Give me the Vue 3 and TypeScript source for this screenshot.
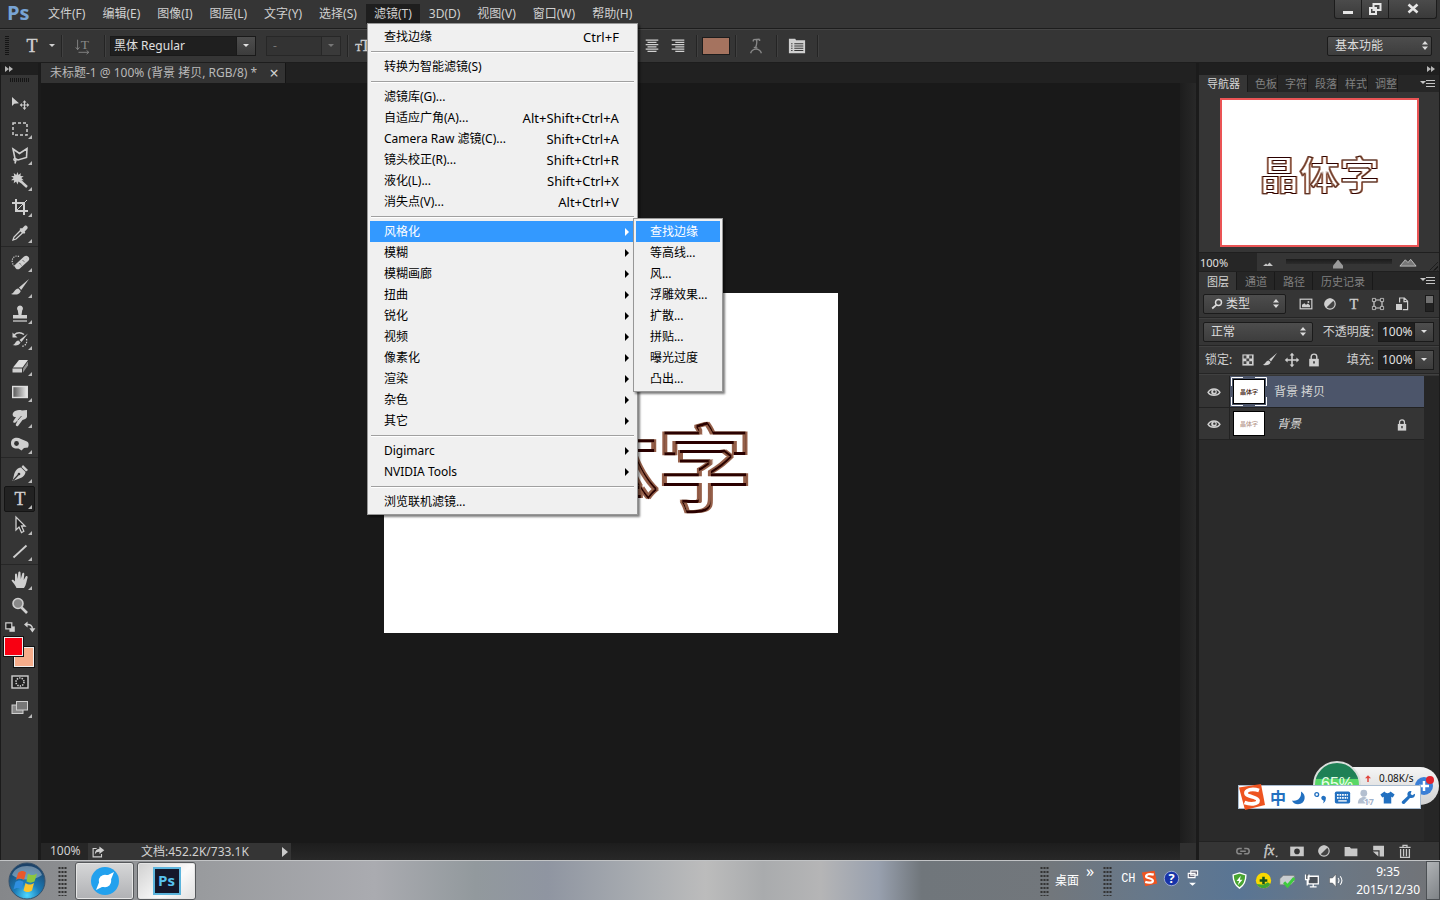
<script setup lang="ts">
import { ref } from 'vue'

interface MenuRow {
  label?: string
  keys?: string
  sub?: boolean
  open?: boolean
}

const menusBefore = ['文件(F)', '编辑(E)', '图像(I)', '图层(L)', '文字(Y)', '选择(S)']
const menusAfter = ['3D(D)', '视图(V)', '窗口(W)', '帮助(H)']

const filterMenu: MenuRow[] = [
  { label: '查找边缘', keys: 'Ctrl+F' },
  {},
  { label: '转换为智能滤镜(S)' },
  {},
  { label: '滤镜库(G)...' },
  { label: '自适应广角(A)...', keys: 'Alt+Shift+Ctrl+A' },
  { label: 'Camera Raw 滤镜(C)...', keys: 'Shift+Ctrl+A' },
  { label: '镜头校正(R)...', keys: 'Shift+Ctrl+R' },
  { label: '液化(L)...', keys: 'Shift+Ctrl+X' },
  { label: '消失点(V)...', keys: 'Alt+Ctrl+V' },
  {},
  { label: '风格化', sub: true, open: true },
  { label: '模糊', sub: true },
  { label: '模糊画廊', sub: true },
  { label: '扭曲', sub: true },
  { label: '锐化', sub: true },
  { label: '视频', sub: true },
  { label: '像素化', sub: true },
  { label: '渲染', sub: true },
  { label: '杂色', sub: true },
  { label: '其它', sub: true },
  {},
  { label: 'Digimarc', sub: true },
  { label: 'NVIDIA Tools', sub: true },
  {},
  { label: '浏览联机滤镜...' },
]

const stylizeMenu = ['查找边缘', '等高线...', '风...', '浮雕效果...', '扩散...', '拼贴...', '曝光过度', '凸出...']

const serifT = (size: number, y: number) =>
  `<text x="10" y="${y}" font-size="${size}" text-anchor="middle" font-family="Liberation Serif, serif" stroke="currentColor" stroke-width=".4">T</text>`

const icons: Record<string, string> = {
  move: '<path d="M2 4v9l2.300-2.200L9 10.300z"/><path d="M14.500 7.300l2 2.200h-1.400v2h2v-1.400l2.200 2-2.200 2v-1.500h-2v2h1.400l-2 2.300-2-2.300h1.400v-2h-2v1.500l-2.200-2 2.200-2v1.400h2v-2h-1.400z"/>',
  marquee: '<rect x="3" y="4" width="14" height="12" fill="none" stroke="currentColor" stroke-width="1.500" stroke-dasharray="3 2"/>',
  lasso: '<path d="M3 4l6.500 4.500L17 3.500l-.5 9-8.500 2.500-3-1.500zM6 14.500l-1 4M5 13.500c-2 0-1 3 1.500 2" fill="none" stroke="currentColor" stroke-width="1.600"/>',
  wand: '<path d="M7.500 1l1 3 2.300-2-.3 3 3.200.3-2.400 1.700 2.400 2.200-3.200.1.300 3-2.300-1.700-1 3-1.400-3L3.700 12.200l.5-2.900-3.200-.1L3.700 7 1 5.300l3.200-.3-.5-3 2.600 2z"/><path d="M10 9.500l7 6.500" stroke="currentColor" stroke-width="2.400"/>',
  crop: '<path d="M6 2v12h12M2 6h12v12" fill="none" stroke="currentColor" stroke-width="2"/><path d="M7 13L17 3" stroke="currentColor"/>',
  dropper: '<path d="M3 17l1-3 6.500-6.500 2.200 2.200L6 16z" fill="none" stroke="currentColor" stroke-width="1.300"/><path d="M9.500 6l1.500-1 1 .6L14.500 3c1.500-1.400 4.200 1 2.800 2.800L14.700 8.500l.6 1-1.300 1.500z"/>',
  heal: '<path d="M9 4.500c-4-2-8 2-6.500 6.500.5 2 1.500 3 3 3.500" fill="none" stroke="currentColor" stroke-width="1.200" stroke-dasharray="1.200 1.200"/><rect x="3.500" y="7.500" width="17" height="6" rx="3" transform="rotate(-42 12 10.500)"/><path d="M9.500 11l2 2.500M12.500 8l2.500 2.500M8 14h.1M16 6.500h.1" stroke="#444" stroke-dasharray="1 1"/>',
  brush: '<path d="M19 1L9 9.500l2.200 2.500z"/><path d="M8.500 10.500l2.200 2.400c-.5 3.300-5.700 4.600-9.700 3 3.500-.5 3-5 7.500-5.400z"/>',
  stamp: '<path d="M10 1.500a3 3 0 0 1 2.200 5L11.500 11H17v3.500H3V11h5.500l-.7-4.500A3 3 0 0 1 10 1.500z"/><path d="M3 17h14" stroke="currentColor" stroke-width="1.300"/>',
  history: '<path d="M4 5c4-3.500 8-2 10-.5" fill="none" stroke="currentColor" stroke-width="1.500"/><path d="M2.500 2.500v5h5z"/><path d="M18 3.500L9.500 10l2 2zM8.500 10.500l2 2c-1 3-5 3.500-8 2.500 3-.5 2.500-4 6-4.500z"/><path d="M16.500 9c1 4-1 7-5 7.500" fill="none" stroke="currentColor" stroke-width="1.200" stroke-dasharray="1.500 1.200"/>',
  eraser: '<path d="M3 11.500L9 4h9l-5.500 7.500z" fill="#ddd"/><path d="M2.500 12.500h9.500v4H2.500z"/><path d="M13 12.500l5-7v4l-5 7z" fill="#8d8d8d"/>',
  gradient: '<defs><linearGradient id="tg"><stop stop-color="#555"/><stop offset="1" stop-color="#eee"/></linearGradient></defs><rect x="2.700" y="4.500" width="14.600" height="11" fill="url(#tg)" stroke="#ddd" stroke-width="1.400"/>',
  smudge: '<path d="M3 5c2-3 6-3.500 9-2.500l5-.5v7c-1 2-2.500 2.500-4.500 3L8 18c-1.500.8-2.800-.8-2-2l2-4-2.500 2.500c-1.500 1-3-.3-2-1.700L6 9H4.500C3 8.500 2 6.800 3 5z"/><path d="M8 12l3.500-4" stroke="#555"/>',
  sponge: '<path d="M1 9c0-5 6-6.500 10-4l6 2.500c2 1 2 3.500 1 6l-4 .5-2.500 2.500-3-2C4 15 1 13.500 1 9z"/><circle cx="6.500" cy="9.500" r="2.400" fill="#333"/>',
  pen: '<path d="M13 2l5 5-2 1.500L11.500 4z"/><path d="M11 4.500l4.500 4.500c-.5 4-4 6-7.500 7L2.500 18 4 12c1-4 3-7 7-7.500z"/><path d="M3 17.500l5.500-6" stroke="#333" stroke-width="1.200"/><circle cx="9" cy="11" r="1.300" fill="#333"/>',
  type: serifT(18, 16),
  arrow: '<path d="M6 2v13l3-3 2.500 5.500 2.300-1.200L11.500 11H15z" fill="#222" stroke="currentColor" stroke-width="1.300"/>',
  line: '<path d="M3.500 16.500l13-12" stroke="currentColor" stroke-width="1.800"/>',
  hand: '<path d="M6.500 18c-1-3-3.500-5-5-7.500.5-1.500 2-1 3.500 1V4.500c.3-1.300 1.800-1.300 2 0L7.700 9 8.300 2.500c.4-1.300 2-1.300 2.200 0L10.800 9l1.500-5.500c.6-1.200 2-.8 2 .5L13.700 10l2-3.500c.8-1 2.200-.3 1.900.9C16.500 11 16.500 14.500 14 18z"/>',
  zoom: '<circle cx="8" cy="7.500" r="5" fill="#888" stroke="currentColor" stroke-width="1.600"/><path d="M11.500 11.500l5.500 5.500" stroke="currentColor" stroke-width="2.600"/>',
  mask: '<rect x="2" y="4" width="16" height="12" fill="#222" stroke="currentColor" stroke-width="1.400"/><circle cx="10" cy="10" r="4" fill="none" stroke="currentColor" stroke-width="1.600" stroke-dasharray="1.400 1.100"/>',
  screen: '<rect x="2" y="7" width="11" height="8.500" fill="#888" stroke="currentColor"/><rect x="6.500" y="3.500" width="11" height="8.500" fill="#777" stroke="currentColor"/>',
  reset: '<path d="M9 9h9v9H9z"/><path d="M3 3h10v10H3z" fill="#222" stroke="currentColor" stroke-width="2"/>',
  swap: '<path d="M5 6c5-1 9 2 9 7" fill="none" stroke="currentColor" stroke-width="2.400"/><path d="M6 1v10L0 6zM9 12h10l-5 7z"/>',
  typeDir: '<text x="12" y="13" font-size="15" text-anchor="middle" font-family="Liberation Serif, serif">T</text><path d="M4 3v11M2 11.500L4 14l2-2.500M5 17h11M14 15l2.500 2-2.500 2" fill="none" stroke="currentColor"/>',
  typeSize: '<text x="5" y="16" font-size="12" text-anchor="middle" stroke="currentColor" stroke-width=".4" font-family="Liberation Serif, serif">T</text><text x="13" y="16" font-size="19" text-anchor="middle" stroke="currentColor" stroke-width=".4" font-family="Liberation Serif, serif">T</text>',
  alignCenter: '<path d="M3 3.500h14M5 6h10M3 8.500h14M5 11h10M3 13.500h14M5 16h10" stroke="currentColor" stroke-width="1.200"/>',
  alignRight: '<path d="M3 3.500h14M7 6h10M3 8.500h14M7 11h10M3 13.500h14M7 16h10" stroke="currentColor" stroke-width="1.200"/>',
  warp: '<path d="M7 3l7-.5M10.500 3c1 3 .5 5-1 9M7 3v2M14 2.500v2M7.500 11.500l4 .5M4 18c2-6 10-6 12 0" fill="none" stroke="currentColor" stroke-width="1.500"/>',
  panel: '<path d="M1 2h7l1 1.500h10V18H1z"/><path d="M3.500 7.500h1.500M7 7.500H17M3.500 10h1.500M7 10H17M3.500 12.500h1.500M7 12.500H17M3.500 15h1.500M7 15H17" stroke="#333" stroke-width="1.100"/>',
  image: '<rect x="2.700" y="4" width="14.600" height="12" fill="none" stroke="currentColor" stroke-width="1.500"/><path d="M5 14v-3l3-2 2 2 2.500-1.500L15 12v2z"/><circle cx="13" cy="7.500" r="1.200"/>',
  adjust: '<circle cx="10" cy="10" r="6.500" fill="#444" stroke="currentColor" stroke-width="1.500"/><path d="M5.200 14.800A6.700 6.700 0 0 1 14.800 5.200z"/>',
  shape: '<path d="M5 5h10v10H5z" fill="none" stroke="currentColor" stroke-width="1.500"/><path d="M3 3h4v4H3zM13 3h4v4h-4zM3 13h4v4H3zM13 13h4v4h-4z" fill="#333" stroke="currentColor"/>',
  smart: '<path d="M7 8V2.500h6L17 6.500V17h-6M12.500 3v4H17" fill="none" stroke="currentColor" stroke-width="1.500"/><path d="M2.500 10h7.500v7.500H2.500z"/>',
  search: '<circle cx="12.500" cy="7.500" r="5" fill="none" stroke="currentColor" stroke-width="2.400"/><path d="M9 11.500l-7 6" stroke="currentColor" stroke-width="3"/>',
  checker: '<path d="M3 3h14v14H3z"/><path d="M4.500 4.500h3.500v3.500H4.500zM11.500 4.500h3.500v3.500h-3.500zM8 8h3.500v3.500H8zM4.500 11.500h3.500v3.500H4.500zM11.500 11.500h3.500v3.500h-3.500z" fill="#444"/>',
  cross: '<path d="M10 1l3 3.500h-2V9h4.500V7l3.500 3-3.500 3v-2H11v4.500h2L10 19l-3-3.500h2V11H4.500v2L1 10l3.500-3v2H9V4.500H7z"/>',
  lock: '<path d="M6.500 9V6c0-4.500 7-4.500 7 0v3" fill="none" stroke="currentColor" stroke-width="1.800"/><path d="M4 8.500h12V18H4z"/><path d="M10 11.500v3" stroke="#333" stroke-width="2"/>',
  eye: '<path d="M1.500 10.500C5 4 15 4 18.500 10.500 15 16 5 16 1.500 10.500z" fill="none" stroke="currentColor" stroke-width="2"/><circle cx="10" cy="10" r="4"/><circle cx="10.500" cy="9.500" r="1.700" fill="#333"/>',
  link: '<path d="M8.500 7H5.500a3.200 3.200 0 0 0 0 6.500h3M11.500 7h3a3.200 3.200 0 0 1 0 6.500h-3M6.500 10.200h7" fill="none" stroke="currentColor" stroke-width="1.900"/>',
  fx: '<text x="9" y="15" font-size="18" text-anchor="middle" font-style="italic" font-family="Liberation Serif, serif" stroke="currentColor" stroke-width=".5">fx</text><path d="M16.500 16h3.500l-1.700 2z"/>',
  addMask: '<path d="M1.500 4.500h17v12h-17z"/><circle cx="10" cy="10.500" r="3.500" fill="#333"/>',
  folder: '<path d="M2 5h6.500l1.500 2h8v9.500H2z"/>',
  newLayer: '<path d="M4 3.500h13.500v13.500H12v-8H4z"/><path d="M3.500 10.500h7V17z"/>',
  trash: '<path d="M3 5.500h14M7.500 5V3h5v2" fill="none" stroke="currentColor" stroke-width="1.600"/><path d="M4.500 7.500V18h11V7.500M8.200 7.500v9M11.800 7.500v9" fill="none" stroke="currentColor" stroke-width="1.600"/>',
  share: '<path d="M8 5H3v12h12v-4" fill="none" stroke="currentColor" stroke-width="1.600"/><path d="M12 2l7 5.500-7 5.500v-3.500c-3 0-5 1-6.500 4C5.500 8.500 8 5.700 12 5.500z"/>',
}

const tools: string[][] = [
  ['move', 'marquee', 'lasso', 'wand', 'crop', 'dropper'],
  ['heal', 'brush', 'stamp', 'history', 'eraser', 'gradient', 'smudge', 'sponge'],
  ['pen', 'type', 'arrow', 'line'],
  ['hand', 'zoom'],
]
const noFlyout = ['move', 'zoom']

const navTabs = ['导航器', '色板', '字符', '段落', '样式', '调整']
const layerTabs = ['图层', '通道', '路径', '历史记录']
const kindIcons = ['image', 'adjust', 'type', 'shape', 'smart']
const lockIcons = ['checker', 'brush', 'cross', 'lock']
const footIcons = ['link', 'fx', 'addMask', 'adjust', 'folder', 'newLayer', 'trash']

const fontName = ref('黑体 Regular')
const opacity = ref('100%')
const fill = ref('100%')
const navZoom = ref('100%')
const zoomLevel = ref(49)
</script>

<template>
  <div class="app">
    <header class="menubar">
      <span class="brand">Ps</span>
      <nav class="menus">
        <button v-for="m in menusBefore" :key="m" class="menu">{{ m }}</button>
        <div class="menu-host">
          <button class="menu active">滤镜(T)</button>
          <div class="popup main-popup">
            <template v-for="(row, i) in filterMenu" :key="i">
              <div v-if="row.label" class="row-host">
                <button class="row" :class="{ hot: row.open }">
                  <span>{{ row.label }}</span>
                  <span v-if="row.keys" class="keys">{{ row.keys }}</span>
                  <i v-if="row.sub" class="sub-arrow"></i>
                </button>
                <div v-if="row.open" class="popup sub-popup">
                  <button v-for="(s, j) in stylizeMenu" :key="s" class="row" :class="{ hot: j === 0 }">{{ s }}</button>
                </div>
              </div>
              <hr v-else class="rule" />
            </template>
          </div>
        </div>
        <button v-for="m in menusAfter" :key="m" class="menu">{{ m }}</button>
      </nav>
      <div class="window-buttons">
        <button aria-label="最小化"><svg viewBox="0 0 20 14"><path d="M5 9h10v3H5z" /></svg></button>
        <button aria-label="还原">
          <svg viewBox="0 0 20 14"><path d="M8.500 2h7v6h-7zM5 6h6v6H5z" fill="#484848" stroke="currentColor" stroke-width="2" /></svg>
        </button>
        <button class="close" aria-label="关闭">
          <svg viewBox="0 0 20 14"><path d="M5.500 2.500l9 8M14.500 2.500l-9 8" stroke="currentColor" stroke-width="2.600" /></svg>
        </button>
      </div>
    </header>

    <div class="options">
      <i class="grip-v"></i>
      <button class="opt tool-now" aria-label="文字工具"><svg viewBox="0 0 20 20" v-html="icons.type"></svg><i class="tri"></i></button>
      <i class="vsep"></i>
      <button class="opt dim" aria-label="文本方向"><svg viewBox="0 0 20 20" v-html="icons.typeDir"></svg></button>
      <i class="vsep"></i>
      <label class="combo font-combo">
        <select v-model="fontName" aria-label="字体"><option>黑体 Regular</option></select>
        <span class="drop"><i class="tri"></i></span>
      </label>
      <label class="combo style-combo dim">
        <select aria-label="字形" disabled><option>-</option></select>
        <span class="drop"><i class="tri"></i></span>
      </label>
      <i class="vsep"></i>
      <div class="size-group"><svg viewBox="0 0 20 20" v-html="icons.typeSize"></svg></div>
      <button class="opt" aria-label="居中"><svg viewBox="0 0 20 20" v-html="icons.alignCenter"></svg></button>
      <button class="opt" aria-label="右对齐"><svg viewBox="0 0 20 20" v-html="icons.alignRight"></svg></button>
      <i class="vsep"></i>
      <button class="color" aria-label="文本颜色"></button>
      <i class="vsep"></i>
      <button class="opt wide dim" aria-label="变形"><svg viewBox="0 0 20 20" v-html="icons.warp"></svg></button>
      <i class="vsep"></i>
      <button class="opt wide" aria-label="面板"><svg viewBox="0 0 20 20" v-html="icons.panel"></svg></button>
      <i class="vsep"></i>
      <label class="pick workspace-pick">
        <select aria-label="工作区"><option>基本功能</option></select>
        <i class="updown"></i>
      </label>
    </div>

    <main class="workspace">
      <aside class="toolbox">
        <div class="strip"><svg viewBox="0 0 8 6"><path d="M0 0l4 3-4 3zM4 0l4 3-4 3z" /></svg></div>
        <i class="grip-h"></i>
        <div v-for="(group, g) in tools" :key="g" class="tool-group">
          <button v-for="t in group" :key="t" class="tool" :class="{ on: t === 'type' }" :aria-label="t">
            <svg viewBox="0 0 20 20" v-html="icons[t]"></svg>
            <i v-if="!noFlyout.includes(t)" class="corner"></i>
          </button>
        </div>
        <div class="mini">
          <button aria-label="默认颜色"><svg viewBox="0 0 20 20" v-html="icons.reset"></svg></button>
          <button aria-label="切换颜色"><svg viewBox="0 0 20 20" v-html="icons.swap"></svg></button>
        </div>
        <div class="swatches">
          <button class="sw back" aria-label="背景色"></button>
          <button class="sw front" aria-label="前景色"></button>
        </div>
        <button class="tool" aria-label="快速蒙版"><svg viewBox="0 0 20 20" v-html="icons.mask"></svg></button>
        <button class="tool" aria-label="屏幕模式"><svg viewBox="0 0 20 20" v-html="icons.screen"></svg><i class="corner"></i></button>
      </aside>

      <section class="document">
        <div class="tabbar">
          <div class="doc-tab">
            <span>未标题-1 @ 100% (背景 拷贝, RGB/8) *</span>
            <button aria-label="关闭标签">×</button>
          </div>
        </div>
        <div class="stage-row">
          <div class="stage">
            <svg class="artboard" viewBox="0 0 454 340">
              <defs>
                <filter id="edges" x="-10%" y="-10%" width="120%" height="120%">
                  <feMorphology in="SourceAlpha" operator="dilate" radius="2 1" result="outer" />
                  <feMorphology in="SourceAlpha" operator="erode" radius="3 2" result="inner" />
                  <feComposite in="outer" in2="inner" operator="out" result="ring" />
                  <feFlood flood-color="#955f4a" />
                  <feComposite in2="ring" operator="in" result="brown" />
                  <feMorphology in="SourceAlpha" operator="dilate" radius="0 1" result="tall" />
                  <feMorphology in="SourceAlpha" operator="erode" radius="0 2" result="flat" />
                  <feComposite in="tall" in2="flat" operator="out" result="bars" />
                  <feFlood flood-color="#2a0300" />
                  <feComposite in2="bars" operator="in" result="dark" />
                  <feMerge><feMergeNode in="brown" /><feMergeNode in="dark" /></feMerge>
                </filter>
              </defs>
              <rect width="454" height="340" fill="#fff" />
              <text class="art-text" x="86" y="211" filter="url(#edges)">晶体字</text>
            </svg>
          </div>
          <div class="scroll-y"></div>
        </div>
        <div class="status">
          <span class="zoom-read">100%</span>
          <div class="status-main">
            <svg viewBox="0 0 20 20" v-html="icons.share"></svg>
            <span>文档:452.2K/733.1K</span>
            <i class="play"></i>
          </div>
          <span class="status-corner"></span>
        </div>
      </section>

      <aside class="panels">
        <div class="strip right"><svg viewBox="0 0 8 6"><path d="M0 0l4 3-4 3zM4 0l4 3-4 3z" /></svg></div>
        <div class="tabs nav-tabs">
          <button v-for="(t, i) in navTabs" :key="t" :class="{ on: i === 0 }">{{ t }}</button>
          <svg class="flyout" viewBox="0 0 15 10"><path d="M0 2h6L3 5z" /><path d="M6 1h9M6 4h9M6 7h9" transform="translate(0 .5)" stroke="currentColor" /></svg>
        </div>
        <div class="navigator">
          <svg class="preview" viewBox="0 0 454 340">
            <rect width="454" height="340" fill="#fff" />
            <text class="art-text" x="86" y="211" filter="url(#edges)">晶体字</text>
          </svg>
        </div>
        <div class="nav-foot">
          <input v-model="navZoom" class="nav-zoom" aria-label="缩放" />
          <svg class="hill small" viewBox="0 0 20 10"><path d="M0 9l6-5 3 2.500 4-4.500 7 7z" /></svg>
          <input v-model="zoomLevel" type="range" min="0" max="100" aria-label="缩放级别" />
          <svg class="hill" viewBox="0 0 20 10"><path d="M1 9l6-7 3 3 3-3.500L19 9z" fill="#777" stroke="currentColor" /></svg>
          <i class="resize"></i>
        </div>

        <div class="tabs layer-tabs">
          <button v-for="(t, i) in layerTabs" :key="t" :class="{ on: i === 0 }">{{ t }}</button>
          <svg class="flyout" viewBox="0 0 15 10"><path d="M0 2h6L3 5z" /><path d="M6 1h9M6 4h9M6 7h9" transform="translate(0 .5)" stroke="currentColor" /></svg>
        </div>
        <div class="line kind">
          <label class="pick kind-pick">
            <svg viewBox="0 0 20 20" v-html="icons.search"></svg>
            <select aria-label="图层类型"><option>类型</option></select>
            <i class="updown"></i>
          </label>
          <div class="kinds">
            <button v-for="k in kindIcons" :key="k" :aria-label="k"><svg viewBox="0 0 20 20" v-html="icons[k]"></svg></button>
          </div>
          <button class="toggle" aria-label="过滤开关"></button>
        </div>
        <div class="line">
          <label class="pick blend-pick">
            <select aria-label="混合模式"><option>正常</option></select>
            <i class="updown"></i>
          </label>
          <label class="amount">不透明度:<span class="combo value-combo"><input v-model="opacity" /><span class="drop"><i class="tri"></i></span></span></label>
        </div>
        <div class="line">
          <span class="lock-label">锁定:</span>
          <div class="locks">
            <button v-for="k in lockIcons" :key="k" :aria-label="k"><svg viewBox="0 0 20 20" v-html="icons[k]"></svg></button>
          </div>
          <label class="amount">填充:<span class="combo value-combo"><input v-model="fill" /><span class="drop"><i class="tri"></i></span></span></label>
        </div>
        <div class="layers">
          <div class="layer-list">
            <div class="layer current">
              <button class="eye" aria-label="可见性"><svg viewBox="0 0 20 20" v-html="icons.eye"></svg></button>
              <span class="thumb">
                <svg viewBox="0 0 30 23"><text class="mini-art" x="15" y="14" text-anchor="middle">晶体字</text></svg>
                <svg class="brackets" viewBox="0 0 36 29"><path d="M12 .500H.500V9M24 .500h11.500V9M12 28.500H.500V20M24 28.500h11.500V20" fill="none" stroke="#fff" /></svg>
              </span>
              <span class="layer-name">背景 拷贝</span>
            </div>
            <div class="layer">
              <button class="eye" aria-label="可见性"><svg viewBox="0 0 20 20" v-html="icons.eye"></svg></button>
              <span class="thumb faint"><svg viewBox="0 0 30 23"><text class="mini-art" x="15" y="14" text-anchor="middle">晶体字</text></svg></span>
              <span class="layer-name locked">背景</span>
              <svg class="lock-mark" viewBox="0 0 20 20" v-html="icons.lock"></svg>
            </div>
          </div>
          <div class="gutter"></div>
        </div>
        <div class="layer-foot">
          <button v-for="(k, i) in footIcons" :key="k" :class="{ dim: i === 0 }" :aria-label="k"><svg viewBox="0 0 20 20" v-html="icons[k]"></svg></button>
        </div>
      </aside>
    </main>

    <div class="speed">
      <span class="ball">65%</span>
      <svg class="up" viewBox="0 0 8 10"><path d="M4 0l4 4H5v5H3V4H0z" fill="#e0443c" /></svg>
      <span>0.08K/s</span>
      <svg class="plus" viewBox="0 0 20 20">
        <circle cx="9" cy="11" r="9" fill="#3b7fd6" /><path d="M9 6v10M4 11h10" stroke="#fff" stroke-width="2.500" /><circle cx="15" cy="5" r="4" fill="#e2222c" />
      </svg>
    </div>
    <div class="ime">
      <svg class="sogou" viewBox="0 0 28 28">
        <path d="M1 4.500L23 1l4 21-20 5z" fill="#ee5420" /><path d="M21 7.500C14 5 7.500 7 8 10.500c.5 3.500 12 3 12 7 0 4-8 4-13.500 2" fill="none" stroke="#fff" stroke-width="3.800" />
      </svg>
      <span class="zh">中</span>
      <svg viewBox="0 0 20 20"><path d="M12 2c8 4 6 17-4 17-4 0-7-2-8-5 8 1.500 13-4 12-12z" /></svg>
      <svg viewBox="0 0 20 20"><circle cx="5" cy="6" r="2.500" fill="none" stroke="currentColor" stroke-width="1.800" /><path d="M11 10a3 3 0 1 1 6 2c0 3-2 5-4 6 1-1.500 1.500-3 1-4-1.800-.5-3-2-3-4z" /></svg>
      <svg viewBox="0 0 20 20"><rect x="1" y="3" width="18" height="14" rx="2" /><path d="M3.500 7h13M3.500 10.500h13" stroke="#fff" stroke-width="2" stroke-dasharray="2 1" /><path d="M5 14h10" stroke="#fff" stroke-width="1.600" /></svg>
      <svg class="person" viewBox="0 0 20 20"><circle cx="8" cy="5" r="4" /><path d="M1 17c0-10 14-10 14 0z" /><text x="14" y="19" font-size="10" font-weight="bold" text-anchor="middle" fill="#9fb2cc" stroke="#fff" stroke-width="2" paint-order="stroke">17</text></svg>
      <svg viewBox="0 0 20 20"><path d="M6 2c2 3 6 3 8 0l5.500 4-2.500 4-2-1v9H5V9l-2 1L.5 6z" /></svg>
      <svg viewBox="0 0 20 20"><path d="M18.500 5l-3.500 2-2.200-1.800L14 1.500C9.500.5 7.500 4.500 9 8l-7.500 7c-1.800 2.500 1.500 5 3.500 3l7-7.500c4 1 7.500-1.500 6.500-5.500z" /></svg>
    </div>

    <footer class="taskbar">
      <button class="start" aria-label="开始">
        <svg viewBox="0 0 38 38">
          <defs>
            <radialGradient id="orb" cx=".5" cy=".9" r=".9"><stop stop-color="#4fd8ff" /><stop offset=".4" stop-color="#1b7cb8" /><stop offset="1" stop-color="#1c3c60" /></radialGradient>
          </defs>
          <circle cx="19" cy="19" r="18" fill="url(#orb)" stroke="#37526c" />
          <path d="M4 13C8 1 30 1 34 13c-8 6-22 6-30 0z" fill="#fff" opacity=".35" />
          <path d="M10 11c3-2.500 5-2.500 8-.5l-2 7.500c-3-2-5-2-8 0z" fill="#e9592b" />
          <path d="M20 11.500c3 2 5 2 9 0l-2.500 8c-3 1.500-5 1.500-8 0z" fill="#8cc63f" />
          <path d="M7.500 20c3-2 5-2 8 0l-2 7.500c-3-2-5-2-8 0z" fill="#2f8fe0" />
          <path d="M17.500 21c3 2 5 2 8.500 0l-2 7.500c-3.500 2-5.500 2-8.500 0z" fill="#fbc52d" />
        </svg>
      </button>
      <i class="dots"></i>
      <button class="task" aria-label="浏览器">
        <svg viewBox="0 0 28 28"><circle cx="14" cy="14" r="14" fill="#22a1ee" /><circle cx="14" cy="14" r="6.200" fill="#fff" /><path d="M23 5l-4 10c-2 4-6 5-8 5l-6 3 4-10c2-4 6-5 8-5z" fill="#fff" /></svg>
      </button>
      <button class="task lit" aria-label="Photoshop"><span class="ps-tile">Ps</span></button>
      <div class="tray">
        <i class="dots"></i>
        <span class="desk">桌面</span>
        <span class="more">»</span>
        <i class="dots"></i>
        <span class="lang">CH</span>
        <svg viewBox="0 0 20 20"><path d="M1 3l15-2 3 15-14 3z" fill="#ee5420" /><path d="M15 5.500C10 4 6 5 6 7.500c0 2.500 8 2 8 5 0 2.500-5 3-9 1.500" fill="none" stroke="#fff" stroke-width="2.600" /></svg>
        <svg viewBox="0 0 20 20"><circle cx="10" cy="10" r="8.500" fill="#1733a8" stroke="#aab6d8" /><text x="10" y="15.500" font-size="15" font-weight="bold" text-anchor="middle" fill="#fff">?</text></svg>
        <svg class="restore" viewBox="0 0 20 20"><path d="M8 1h8v5H8zM5 4h8v5H5z" fill="#667" stroke="#fff" stroke-width="1.300" /><path d="M6 15h8l-4 3.500z" fill="#fff" /></svg>
        <div class="notify">
          <svg viewBox="0 0 20 20"><path d="M10 1l7.500 2.500c0 8-2 12-7.500 15.500C4.500 15.500 2.500 11.500 2.500 3.500z" fill="#49a532" stroke="#fff" stroke-width="1.600" /><path d="M11.500 4.500l-5 6h3l-1.500 5 5.500-6.500h-3z" fill="#fff" /></svg>
          <svg viewBox="0 0 20 20"><circle cx="10" cy="10" r="9" fill="#f8d800" /><path d="M2 14a9 9 0 0 0 16 0l-3-2-5 3z" fill="#3fa535" /><path d="M10 5.500v9M5.500 10h9" stroke="#14521c" stroke-width="3" /></svg>
          <svg viewBox="0 0 20 20"><path d="M1 8l4-4h13v7l-4 4H1z" fill="#c9cdd0" stroke="#777" stroke-width=".7" /><path d="M6 12l4 4.500L18 7" fill="none" stroke="#3ecb3e" stroke-width="3.400" /></svg>
          <svg viewBox="0 0 20 20"><path d="M6 5h12v9H6zM12 14v3M8 17.500h8M3 3v6h4V3M5 9v7" fill="#4a5058" stroke="#fff" stroke-width="1.500" /></svg>
          <svg viewBox="0 0 20 20"><path d="M3 7h3.500l4-4.500v15l-4-4.500H3z" fill="#fff" stroke="#555" stroke-width=".6" /><path d="M13 7c1.500 2 1.500 4 0 6M15.500 5c2.500 3 2.500 7 0 10" fill="none" stroke="#fff" stroke-width="1.200" /></svg>
        </div>
        <div class="clock"><span>9:35</span><span>2015/12/30</span></div>
        <button class="show-desk" aria-label="显示桌面"></button>
      </div>
    </footer>
  </div>
</template>

<style>
html,
body {
  margin: 0;
  background: #191919;
}
</style>

<style scoped>
.app {
  position: relative;
  display: flex;
  flex-direction: column;
  height: 100vh;
  overflow: hidden;
  background: #353535;
  color: #d0d0d0;
  font: 12px/16px "Noto Sans", "Noto Sans CJK SC", sans-serif;
}
.app * {
  box-sizing: border-box;
}
button,
select,
input {
  font: inherit;
  color: inherit;
  margin: 0;
  padding: 0;
  border: 0;
  background: none;
  border-radius: 0;
  outline: 0;
}
select {
  appearance: none;
  opacity: 1;
}
svg {
  display: block;
  flex: none;
  fill: currentColor;
}
i {
  display: block;
  flex: none;
}

/* menu bar */
.menubar {
  display: flex;
  align-items: flex-start;
  height: 28px;
  flex: none;
}
.brand {
  width: 40px;
  padding-left: 7px;
  font: bold 20px/26px "Open Sans", sans-serif;
  color: #78a4d4;
}
.menus {
  display: flex;
  gap: 1px;
  padding-top: 4px;
}
.menu {
  display: block;
  height: 20px;
  padding: 0 8px;
  line-height: 20px;
  white-space: nowrap;
}
.menu.active {
  background: #1e1e1e;
}
.menu-host,
.row-host {
  position: relative;
}
.popup {
  position: absolute;
  z-index: 20;
  padding: 2px;
  border: 1px solid #979797;
  background: #f0f0f0;
  color: #000;
  box-shadow: 2px 2px 2px rgba(0, 0, 0, 0.5);
}
.main-popup {
  left: 1px;
  top: 19px;
  width: 271px;
}
.sub-popup {
  left: 263px;
  top: -3px;
  width: 90px;
}
.row {
  display: flex;
  align-items: center;
  width: 100%;
  height: 21px;
  padding: 1px 6px 0 14px;
  text-align: left;
  white-space: nowrap;
}
.sub-popup .row {
  padding-right: 0;
}
.row.hot {
  background: #3399ff;
  color: #fff;
}
.keys {
  margin-left: auto;
  margin-right: 10px;
  font-size: 13px;
}
.sub-arrow {
  margin-left: auto;
  border: 4px solid transparent;
  border-left-color: currentColor;
  border-right: 0;
}
.rule {
  height: 9px;
  margin: 0 1px;
  border: 0;
  background: linear-gradient(#a0a0a0, #a0a0a0) 0 4px / 100% 1px no-repeat, linear-gradient(#fff, #fff) 0 5px / 100% 1px no-repeat;
}
.window-buttons {
  display: flex;
  margin-left: auto;
  margin-right: 3px;
  border: 1px solid #1c1c1c;
  border-top: 0;
  border-radius: 0 0 3px 3px;
  background: linear-gradient(#4b4b4b, #3a3a3a);
  color: #e6e6e6;
}
.window-buttons button {
  display: grid;
  place-items: center;
  width: 27px;
  height: 18px;
  border-right: 1px solid #1c1c1c;
}
.window-buttons .close {
  width: 47px;
  border: 0;
}
.window-buttons svg {
  width: 20px;
  height: 14px;
}

/* options bar */
.options {
  display: flex;
  align-items: center;
  flex: none;
  height: 35px;
  padding: 0 8px 0 5px;
  border-top: 1px solid #1d1d1d;
  border-bottom: 1px solid #1d1d1d;
  box-shadow: inset 0 1px #454545;
}
.grip-v {
  width: 4px;
  height: 20px;
  background: repeating-linear-gradient(#151515 0 1px, transparent 1px 2px);
}
.vsep {
  width: 1px;
  height: 22px;
  background: #242424;
  box-shadow: 1px 0 #404040;
}
.opt {
  display: grid;
  place-items: center;
  width: 26px;
  height: 24px;
}
.opt svg {
  width: 18px;
  height: 18px;
}
.opt.wide {
  width: 40px;
}
.dim {
  color: #888;
}
.tool-now {
  display: flex;
  align-items: center;
  width: 52px;
  padding-left: 13px;
}
.tool-now svg {
  width: 20px;
  height: 20px;
}
.tri {
  border: 3px solid transparent;
  border-top-color: currentColor;
  border-bottom: 0;
}
.tool-now .tri {
  margin-left: 7px;
}
.tool-now + .vsep + .opt {
  width: 42px;
}
.combo {
  display: flex;
  height: 20px;
  border: 1px solid #1a1a1a;
  background: #1f1f1f;
  color: #e0e0e0;
}
.combo select,
.combo input {
  flex: 1;
  min-width: 0;
  padding: 0 3px;
  line-height: 18px;
}
.drop {
  display: grid;
  place-items: center;
  width: 19px;
  border-left: 1px solid #1a1a1a;
  background: linear-gradient(#4e4e4e, #3c3c3c);
}
.font-combo {
  width: 146px;
  margin-left: 5px;
}
.style-combo {
  width: 75px;
  margin: 0 6px 0 10px;
  border-color: #272727;
  background: #333;
  color: #777;
}
.style-combo select {
  padding-left: 6px;
}
.style-combo .drop {
  border-color: #272727;
  background: #3a3a3a;
}
.size-group {
  width: 291px;
  padding-left: 6px;
}
.size-group svg {
  width: 18px;
  height: 18px;
}
.color {
  width: 28px;
  height: 18px;
  margin: 0 5px;
  border: 1px solid #1d1d1d;
  background: #a5735f;
}
.options > .opt + .opt + .vsep {
  margin-left: 5px;
}
.pick {
  position: relative;
  display: flex;
  align-items: center;
  height: 20px;
  padding: 0 6px 0 7px;
  border: 1px solid #1b1b1b;
  border-radius: 2px;
  background: linear-gradient(#4d4d4d, #3d3d3d);
  color: #dcdcdc;
}
.pick select {
  flex: 1;
  min-width: 0;
  line-height: 18px;
}
.updown {
  width: 6px;
  height: 9px;
  background: currentColor;
  clip-path: polygon(50% 0, 100% 40%, 0 40%, 0 60%, 100% 60%, 50% 100%, 0 60%, 0 40%);
}
.workspace-pick {
  width: 105px;
  margin-left: auto;
  padding: 0 3px 0 7px;
}

/* workspace */
.workspace {
  display: flex;
  flex: 1;
  min-height: 0;
  background: #1b1b1b;
}
.toolbox {
  display: flex;
  flex-direction: column;
  align-items: center;
  width: 37px;
  margin: 0 3px 0 1px;
  background: #353535;
}
.strip {
  display: flex;
  align-items: center;
  align-self: stretch;
  flex: none;
  height: 12px;
  padding: 0 4px;
  background: #1f1f1f;
  color: #b5b5b5;
}
.strip svg {
  width: 8px;
  height: 6px;
}
.strip.right {
  justify-content: flex-end;
}
.grip-h {
  width: 20px;
  height: 4px;
  margin: 3px 0 8px;
  background: repeating-linear-gradient(90deg, #151515 0 1px, transparent 1px 2px);
}
.tool-group {
  align-self: stretch;
  padding: 0 2px;
}
.tool-group + .tool-group {
  border-top: 1px solid #262626;
  padding-top: 2px;
}
.tool {
  position: relative;
  display: grid;
  place-items: center;
  flex: none;
  width: 31px;
  height: 26px;
  margin: 0 auto;
  color: #cfcfcf;
}
.tool.on {
  border: 1px solid #141414;
  border-radius: 2px;
  background: #222;
}
.tool svg {
  width: 20px;
  height: 20px;
}
.corner {
  position: absolute;
  right: 3px;
  bottom: 3px;
  border: 0 solid transparent;
  border-width: 0 0 4px 4px;
  border-bottom-color: #bbb;
}
.tool.on .corner {
  right: 2px;
  bottom: 2px;
}
.mini {
  display: flex;
  gap: 8px;
  margin: 2px 0 4px;
}
.mini svg {
  width: 12px;
  height: 12px;
}
.swatches {
  display: grid;
  grid-template-columns: 10px 9px 11px;
  grid-template-rows: 10px 9px 11px;
  align-self: flex-start;
  margin: 0 0 2px 3px;
}
.sw {
  border: 1px solid #eee;
  box-shadow: 0 0 0 1px #111;
}
.front {
  grid-area: 1 / 1 / 3 / 3;
  background: #f80012;
}
.back {
  grid-area: 2 / 2 / 4 / 4;
  background: #f6ad8b;
}
.document {
  display: flex;
  flex-direction: column;
  flex: 1;
  min-width: 0;
}
.tabbar {
  display: flex;
  flex: none;
  height: 20px;
  background: #212121;
}
.doc-tab {
  display: flex;
  align-items: center;
  gap: 12px;
  padding: 0 6px 0 9px;
  border-right: 1px solid #151515;
  background: #333;
  white-space: nowrap;
  color: #b9b9b9;
}
.doc-tab button {
  width: 10px;
  font-size: 16px;
  color: #d0d0d0;
}
.stage-row {
  display: flex;
  flex: 1;
  min-height: 0;
}
.stage {
  display: grid;
  place-items: center;
  flex: 1;
  background: #191919;
}
.artboard {
  width: 454px;
  height: 340px;
}
.art-text {
  font: bold 94px "Noto Sans CJK SC", sans-serif;
  fill: #000;
}
.scroll-y {
  width: 16px;
  background: linear-gradient(90deg, #1d1d1d, #282828);
}
.status {
  display: flex;
  flex: none;
  height: 17px;
  background: linear-gradient(#1d1d1d, #282828);
}
.zoom-read {
  width: 47px;
  padding-left: 9px;
  background: #262626;
}
.status-main {
  display: flex;
  align-items: center;
  width: 203px;
  padding: 0 3px;
  background: #353535;
}
.status-main svg {
  width: 14px;
  height: 14px;
}
.status-main span {
  margin-left: 36px;
}
.play {
  margin-left: auto;
  border: 5px solid transparent;
  border-left: 6px solid #ccc;
  border-right: 0;
}
.status-corner {
  width: 16px;
  margin-left: auto;
  background: #303030;
}

/* panels */
.panels {
  display: flex;
  flex-direction: column;
  width: 240px;
  margin: 0 1px 0 3px;
  background: #353535;
}
.tabs {
  display: flex;
  flex: none;
  height: 17px;
  background: #262626;
  color: #808080;
  font-size: 11px;
  line-height: 17px;
}
.tabs button {
  padding: 0 7px 0 8px;
  border-right: 1px solid #191919;
  white-space: nowrap;
}
.tabs .on {
  background: #353535;
  color: #d6d6d6;
}
.nav-tabs button:not(.on) {
  width: 30px;
  padding: 0 0 0 7px;
  overflow: hidden;
  text-align: left;
}
.flyout {
  width: 15px;
  height: 10px;
  margin: 4px 4px 0 auto;
  color: #c5c5c5;
}
.navigator {
  display: grid;
  place-items: center;
  padding: 6px 0 5px;
}
.preview {
  width: 199px;
  height: 149px;
  border: 2px solid #ea5455;
  background: #fff;
}
.nav-foot {
  display: flex;
  align-items: center;
  flex: none;
  height: 20px;
  border-top: 1px solid #1f1f1f;
  border-bottom: 1px solid #1f1f1f;
  color: #c5c5c5;
}
.nav-zoom {
  width: 58px;
  height: 100%;
  padding: 0 1px;
  background: #262626;
  color: #e0e0e0;
  font-size: 11px;
}
.hill {
  width: 18px;
  height: 9px;
  margin-left: 7px;
}
.hill.small {
  width: 10px;
  height: 6px;
  margin: 4px 13px 0 6px;
}
input[type="range"] {
  appearance: none;
  width: 106px;
  height: 14px;
  background: linear-gradient(#1b1b1b, #2c2c2c) 0 4px / 100% 5px no-repeat;
}
input[type="range"]::-webkit-slider-thumb {
  appearance: none;
  width: 10px;
  height: 9px;
  margin-top: 4px;
  background: #9a9a9a;
  clip-path: polygon(50% 0, 100% 70%, 100% 100%, 0 100%, 0 70%);
}
.resize {
  width: 9px;
  height: 9px;
  margin: 8px 1px 0 auto;
  background: repeating-linear-gradient(135deg, #1a1a1a 0 1px, transparent 1px 3px);
  clip-path: polygon(100% 0, 100% 100%, 0 100%);
}
.layer-tabs {
  height: 18px;
}
.line {
  display: flex;
  align-items: center;
  flex: none;
  height: 28px;
  padding: 0 5px 0 4px;
  border-bottom: 1px solid #252525;
  box-shadow: 0 1px #404040;
}
.kind-pick {
  width: 83px;
}
.kind-pick svg {
  width: 12px;
  height: 12px;
  margin-right: 3px;
}
.kinds,
.locks {
  display: flex;
  color: #cfcfcf;
}
.kinds {
  gap: 8px;
  margin-left: 12px;
}
.kinds svg,
.locks svg {
  width: 16px;
  height: 16px;
}
.toggle {
  width: 9px;
  height: 17px;
  margin-left: auto;
  border: 1px solid #1a1a1a;
  background: linear-gradient(#707070 0 45%, #222 45%);
}
.blend-pick {
  width: 110px;
}
.amount {
  display: flex;
  align-items: center;
  gap: 4px;
  margin-left: auto;
  white-space: nowrap;
}
.value-combo {
  width: 56px;
}
.value-combo input {
  padding: 0 0 0 3px;
}
.lock-label {
  width: 37px;
  padding-left: 2px;
}
.locks {
  gap: 6px;
}
.layers {
  display: flex;
  flex: 1;
  min-height: 0;
  margin-top: 2px;
}
.layer-list {
  flex: 1;
  background: #2a2a2a;
}
.layer {
  display: flex;
  align-items: center;
  height: 32px;
  border-bottom: 1px solid #222;
  background: #353535;
}
.layer.current {
  background: #4c556a;
}
.eye {
  display: grid;
  place-items: center;
  width: 31px;
  height: 100%;
  border-right: 1px solid #222;
  background: #353535;
}
.eye svg {
  width: 14px;
  height: 14px;
}
.thumb {
  position: relative;
  width: 32px;
  height: 25px;
  margin: 0 9px 0 3px;
  border: 1px solid #000;
  background: #fff;
}
.brackets {
  position: absolute;
  left: -3px;
  top: -3px;
  width: 36px;
  height: 29px;
}
.mini-art {
  font: 500 6px "Noto Sans CJK SC", sans-serif;
  fill: #401a10;
}
.faint .mini-art {
  fill: #b89a90;
}
.layer-name {
  color: #d5d5d5;
}
.locked {
  margin-left: 3px;
  font-style: italic;
}
.lock-mark {
  width: 14px;
  height: 14px;
  margin: 2px 15px 0 auto;
}
.gutter {
  width: 15px;
  background: #262626;
}
.layer-foot {
  display: flex;
  align-items: center;
  justify-content: flex-end;
  flex: none;
  gap: 11px;
  height: 19px;
  padding-right: 26px;
  border-top: 1px solid #222;
  color: #c8c8c8;
}
.layer-foot svg {
  width: 16px;
  height: 16px;
}

/* floating widgets */
.speed {
  position: absolute;
  z-index: 5;
  right: 1px;
  bottom: 95px;
  display: flex;
  align-items: flex-start;
  width: 102px;
  height: 38px;
  padding: 3px 0 0 26px;
  border-radius: 4px 19px 19px 4px;
  background: linear-gradient(#f5f5f5, #d2d2d2);
  color: #111;
  font-size: 10px;
  line-height: 16px;
}
.ball {
  position: absolute;
  left: -24px;
  top: -6px;
  width: 48px;
  height: 48px;
  border: 2px solid #d9dedb;
  border-radius: 50%;
  background: linear-gradient(#1e8055 0 30%, #258b5c 36%, #58d867 36%);
  color: #e9ffe9;
  font: 16px/42px "Liberation Sans", sans-serif;
  text-align: center;
}
.up {
  width: 6px;
  height: 8px;
  margin: 5px 8px 0 2px;
}
.plus {
  position: absolute;
  right: 4px;
  top: 8px;
  width: 20px;
  height: 20px;
}
.ime {
  position: absolute;
  z-index: 6;
  right: 19px;
  bottom: 91px;
  display: flex;
  align-items: center;
  gap: 6px;
  height: 24px;
  padding-right: 4px;
  border: 1px solid #a9bcd0;
  background: #fff;
  color: #2270c0;
}
.ime svg {
  width: 15px;
  height: 15px;
}
.ime svg:nth-of-type(4) {
  width: 17px;
  height: 17px;
}
.ime .sogou {
  width: 28px;
  height: 28px;
  margin: 0 -2px 0 -1px;
}
.ime .person {
  width: 17px;
  height: 17px;
  color: #b3bfd0;
}
.zh {
  font: bold 16px/20px "Noto Sans CJK SC", sans-serif;
}

/* taskbar */
.taskbar {
  display: flex;
  align-items: center;
  flex: none;
  height: 40px;
  padding-left: 8px;
  border-top: 1px solid #c2c4c6;
  background:
    radial-gradient(ellipse at 17% 110%, rgba(125, 128, 135, 0.6), transparent 7%),
    radial-gradient(ellipse at 43% 120%, rgba(195, 195, 195, 0.7), transparent 6%),
    radial-gradient(ellipse at 90% 110%, rgba(125, 125, 128, 0.8), transparent 9%),
    linear-gradient(90deg, #85878a, #999b9e 14%, #aaabb0 26%, #92999d 33%, #8f95a1 38%, #a7abb0 44%, #bcbcbc 49%, #a9abad 53%, #b5b5b6 57%, #98a0ae 61%, #70767b 64%, #72777c 73%, #66788b 80%, #597594 86%, #6b7784 93%, #727376);
  color: #fff;
}
.start svg {
  width: 38px;
  height: 38px;
}
.dots {
  width: 9px;
  height: 30px;
  background: radial-gradient(circle, #333 40%, transparent 50%) 0 0 / 3px 4px;
}
.start + .dots {
  margin: 0 8px 0 12px;
}
.task {
  display: grid;
  place-items: center;
  width: 59px;
  height: 38px;
  margin-right: 3px;
  border: 1px solid #55585b;
  border-radius: 3px;
  background: linear-gradient(#d6d7d8, #b0b1b4);
  box-shadow: inset 0 0 0 1px #e5e5e5;
}
.task.lit {
  background: linear-gradient(135deg, #d0d0d0, #fafafa 60%, #e0e0e0);
}
.task svg {
  width: 28px;
  height: 28px;
}
.ps-tile {
  width: 28px;
  height: 28px;
  border: 2px solid #5bb4dc;
  background: #15182b;
  color: #57c3f0;
  font: bold 15px/23px "Open Sans", sans-serif;
}
.tray {
  display: flex;
  align-items: center;
  height: 100%;
  margin-left: auto;
}
.tray svg {
  width: 17px;
  height: 17px;
}
.desk {
  margin-left: 6px;
}
.more {
  margin: 0 9px 20px 7px;
  font-size: 16px;
}
.lang {
  width: 18px;
  margin: 0 2px 4px 9px;
  font: 12px/14px "Liberation Mono", monospace;
}
.lang + svg {
  margin: 0 5px 4px 0;
}
.lang + svg + svg {
  margin: 0 4px 4px 0;
}
.restore {
  margin-bottom: 4px;
}
.notify {
  display: flex;
  gap: 7px;
  margin-left: 30px;
}
.clock {
  display: flex;
  flex-direction: column;
  align-items: center;
  margin: 0 6px 0 12px;
  line-height: 18px;
}
.show-desk {
  width: 14px;
  height: 100%;
  border: 1px solid #4c5054;
  background: linear-gradient(135deg, #b0b3b6, #7f8387);
}
</style>
